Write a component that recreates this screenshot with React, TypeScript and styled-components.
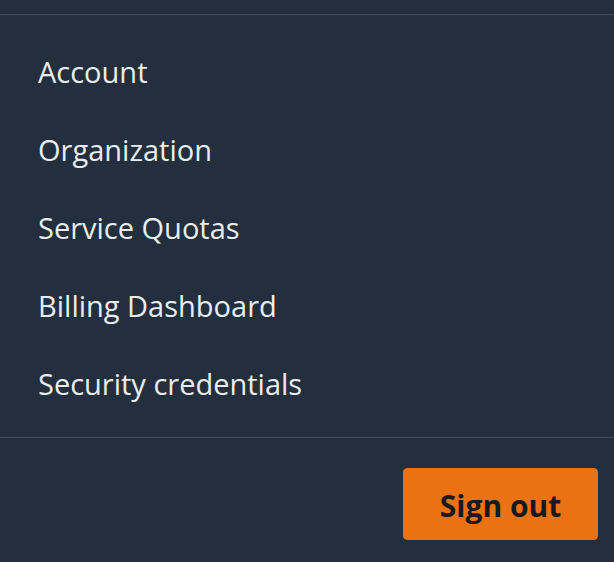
import { createGlobalStyle, styled } from "styled-components"

const GlobalStyle = createGlobalStyle`
    html, body {
        margin: 0;
        padding: 0;
        background-color: #232f3e;
    }
    body {
        font-family: "Open Sans", "Noto Sans", sans-serif;
    }
`

const links = ["Account", "Organization", "Service Quotas", "Billing Dashboard", "Security credentials"]

const App = () => {
    return (
        <>
            <GlobalStyle />
            <Menu>
                <Divider $top={14} />
                <MenuList>
                    {links.map(label => (
                        <MenuItem key={label}>
                            <MenuLink href="#">{label}</MenuLink>
                        </MenuItem>
                    ))}
                </MenuList>
                <Divider $top={0} />
                <Footer>
                    <SignOutButton type="button">Sign out</SignOutButton>
                </Footer>
            </Menu>
        </>
    )
}

export default App

const Menu = styled.div`
    width: 614px;
    height: 562px;
    box-sizing: border-box;
    background-color: #232f3e;
    display: flex;
    flex-direction: column;
`

const Divider = styled.div<{ $top: number }>`
    height: 1px;
    margin-top: ${props => props.$top}px;
    background-color: #414d5c;
`

const MenuList = styled.ul`
    list-style: none;
    margin: 0;
    padding: 17px 0 15px 38px;
`

const MenuItem = styled.li`
    height: 78px;
    display: flex;
    align-items: center;
`

const MenuLink = styled.a`
    color: #eaeded;
    font-size: 29px;
    line-height: 1;
    text-decoration: none;
`

const Footer = styled.div`
    display: flex;
    justify-content: flex-end;
    padding: 30px 16px 0 0;
`

const SignOutButton = styled.button`
    width: 195px;
    height: 72px;
    padding: 4px 0 0;
    border: 1px solid #ec7211;
    border-radius: 4px;
    background-color: #ec7211;
    color: #16191f;
    font-family: "Open Sans", "Noto Sans", sans-serif;
    font-size: 30px;
    font-weight: 700;
    line-height: 1;
    cursor: pointer;
`
